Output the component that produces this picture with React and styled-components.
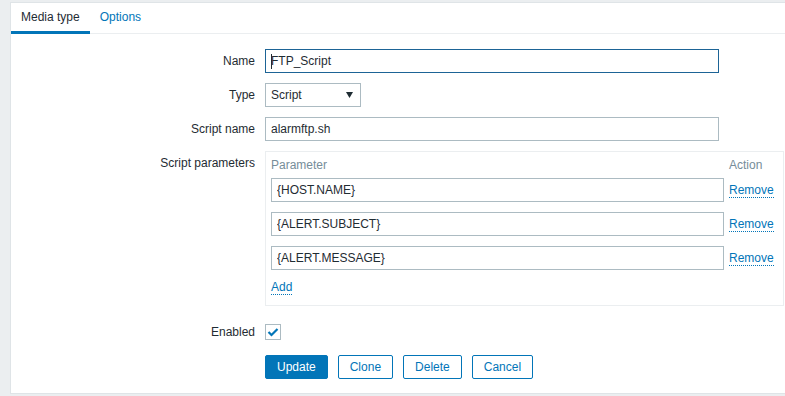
import React from 'react';
import styled, { createGlobalStyle } from 'styled-components';

const GlobalStyle = createGlobalStyle`
  html, body {
    margin: 0;
    padding: 0;
    background: #ebeef0;
  }

  body {
    padding: 2px 0 0 10px;
    font-family: "Liberation Sans", Arial, sans-serif;
    font-size: 12px;
    color: #1f2c33;
  }
`;

const Card = styled.div`
  background: #fff;
  border: 1px solid #dfe4e7;
  border-right: none;
  padding-bottom: 14px;
`;

const TabBar = styled.ul`
  display: flex;
  margin: 0;
  padding: 0;
  list-style: none;
  border-bottom: 1px solid #ebeef0;
`;

const Tab = styled.li`
  padding: 0 10px;
  line-height: 28px;
  margin-bottom: -1px;
  border-bottom: 3px solid ${({ active }) => (active ? '#0275b8' : 'transparent')};
  color: ${({ active }) => (active ? '#1f2c33' : '#0275b8')};
`;

const Form = styled.div`
  display: flex;
  flex-direction: column;
  gap: 10px;
  padding-top: 15px;
`;

const Row = styled.div`
  display: flex;
  align-items: flex-start;
  margin-top: ${({ offset }) => offset || 0}px;
`;

const Label = styled.label`
  flex: 0 0 254px;
  box-sizing: border-box;
  padding-right: 10px;
  text-align: right;
  line-height: 24px;
`;

const Field = styled.div`
  display: flex;
  align-items: center;
  min-height: 24px;
  position: relative;
`;

const TextInput = styled.input`
  box-sizing: border-box;
  width: ${({ width }) => width || 454}px;
  height: 24px;
  padding: 0 5px;
  margin: 0;
  border: 1px solid ${({ focused }) => (focused ? '#1d6496' : '#acbbc2')};
  background: #fff;
  font: inherit;
  color: #1f2c33;
  outline: none;
`;

const Caret = styled.span`
  position: absolute;
  left: 6px;
  top: 5px;
  width: 1px;
  height: 15px;
  background: #1f2c33;
`;

const Select = styled.div`
  box-sizing: border-box;
  display: flex;
  align-items: center;
  justify-content: space-between;
  width: 96px;
  height: 24px;
  padding: 0 7px 0 5px;
  border: 1px solid #acbbc2;
  background: #fff;
`;

const ParamBox = styled.div`
  box-sizing: border-box;
  width: 519px;
  border: 1px solid #ebeef0;
  padding: 0 10px 0 5px;
`;

const ParamRow = styled.div`
  display: flex;
  align-items: center;
  gap: 5px;
  height: 24px;
  margin-bottom: 10px;
`;

const HeadRow = styled.div`
  display: flex;
  gap: 5px;
  line-height: 26px;
  color: #768d99;
`;

const Grow = styled.div`
  flex: 1;
`;

const ActionCell = styled.div`
  width: 44px;
`;

const ParamInput = styled(TextInput)`
  flex: 1;
  width: auto;
`;

const Link = styled.a`
  display: inline-block;
  line-height: 14px;
  color: #0275b8;
  text-decoration: none;
  border-bottom: 1px dotted #0275b8;
  cursor: pointer;
`;

const AddRow = styled.div`
  height: 25px;
`;

const CheckBox = styled.span`
  box-sizing: border-box;
  display: flex;
  align-items: center;
  justify-content: center;
  width: 16px;
  height: 16px;
  border: 1px solid #acbbc2;
  background: #fff;
`;

const Buttons = styled.div`
  display: flex;
  gap: 10px;
  padding-left: 254px;
  margin-top: 1px;
`;

const Button = styled.button`
  box-sizing: border-box;
  height: 24px;
  padding: 0 11px;
  border: 1px solid #0275b8;
  border-radius: 2px;
  background: ${({ primary }) => (primary ? '#0275b8' : '#fff')};
  color: ${({ primary }) => (primary ? '#fff' : '#0275b8')};
  font: inherit;
  cursor: pointer;
`;

const params = ['{HOST.NAME}', '{ALERT.SUBJECT}', '{ALERT.MESSAGE}'];

export default function App() {
  return (
    <>
      <GlobalStyle />
      <Card>
        <TabBar>
          <Tab active>Media type</Tab>
          <Tab>Options</Tab>
        </TabBar>
        <Form>
          <Row>
            <Label>Name</Label>
            <Field>
              <TextInput focused readOnly value="FTP_Script" />
              <Caret />
            </Field>
          </Row>
          <Row>
            <Label>Type</Label>
            <Select>
              <span>Script</span>
              <svg width="7" height="6" viewBox="0 0 7 6">
                <polygon points="0,0 7,0 3.5,6" fill="#1f2c33" />
              </svg>
            </Select>
          </Row>
          <Row>
            <Label>Script name</Label>
            <TextInput readOnly value="alarmftp.sh" />
          </Row>
          <Row>
            <Label>Script parameters</Label>
            <ParamBox>
              <HeadRow>
                <Grow>Parameter</Grow>
                <ActionCell>Action</ActionCell>
              </HeadRow>
              {params.map(p => (
                <ParamRow key={p}>
                  <ParamInput readOnly value={p} />
                  <ActionCell>
                    <Link>Remove</Link>
                  </ActionCell>
                </ParamRow>
              ))}
              <AddRow>
                <Link>Add</Link>
              </AddRow>
            </ParamBox>
          </Row>
          <Row offset={4}>
            <Label>Enabled</Label>
            <Field>
              <CheckBox>
                <svg width="12" height="10" viewBox="0 0 12 10">
                  <path d="M1.5 5 L4.5 8 L10.5 2" fill="none" stroke="#0275b8" strokeWidth="2.2" />
                </svg>
              </CheckBox>
            </Field>
          </Row>
          <Buttons>
            <Button primary>Update</Button>
            <Button>Clone</Button>
            <Button>Delete</Button>
            <Button>Cancel</Button>
          </Buttons>
        </Form>
      </Card>
    </>
  );
}
